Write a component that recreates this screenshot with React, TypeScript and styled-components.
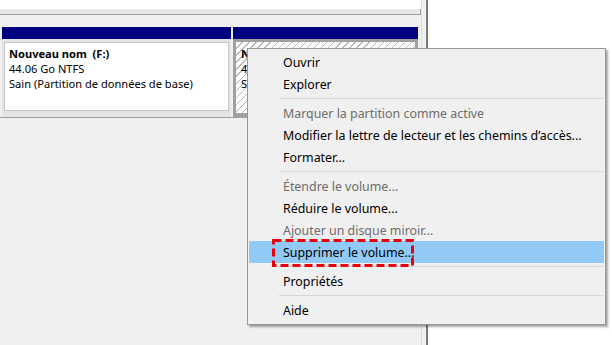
import React from "react";
import styled, { createGlobalStyle } from "styled-components";

const Global = createGlobalStyle`
  html, body { margin: 0; padding: 0; background: #ffffff; }
  body { font-family: "Noto Sans", "Segoe UI", sans-serif; font-size: 12px; }
`;

const Screen = styled.div`
  position: relative;
  width: 612px;
  height: 345px;
  display: flex;
  overflow: hidden;
  background: #ffffff;
`;

const LeftPane = styled.div`
  width: 421px;
  display: flex;
  flex-direction: column;
  background: #f0f0f0;
`;

const ListBottom = styled.div`
  height: 9px;
  background: #ffffff;
`;

const ScrollStrip = styled.div`
  height: 5px;
  background: #e6e6e6;
  border-bottom: 1px solid #a0a0a0;
  border-right: 1px solid #a0a0a0;
`;

const DiskRow = styled.div`
  margin-top: 12px;
  display: flex;
  gap: 2px;
  padding-left: 2px;
  padding-right: 3px;
  border-bottom: 1px solid #a0a0a0;
`;

const Partition = styled.div<{ $w: number }>`
  width: ${(p) => p.$w}px;
  display: flex;
  flex-direction: column;
`;

const Header = styled.div`
  height: 12px;
  background: #000080;
`;

const Body = styled.div`
  height: 78px;
  box-sizing: border-box;
  padding: 3px 2px 6px 2px;
  background: #e4e4e4;
  display: flex;
`;

const SelectedBody = styled(Body)`
  padding: 0;
  border: 3px solid #a0a0a0;
  border-bottom-width: 4px;
  background: #ffffff
    repeating-linear-gradient(
      135deg,
      transparent 0 4px,
      #b8b8b8 4px 5px
    );
`;

const Info = styled.div<{ $sel?: boolean }>`
  flex: 1;
  box-sizing: border-box;
  border: ${(p) => (p.$sel ? "none" : "1px solid #c6c6c6")};
  background: ${(p) => (p.$sel ? "transparent" : "#ffffff")};
  padding: ${(p) => (p.$sel ? "4px 0 0 5px" : "3px 0 0 4px")};
  color: #000000;
  font-size: 11.1px;
  line-height: 15px;
  white-space: nowrap;
  overflow: hidden;
`;

const InfoLine = styled.div<{ $bold?: boolean }>`
  font-weight: ${(p) => (p.$bold ? 700 : 400)};
  white-space: pre;
`;

const Splitter = styled.div`
  width: 7px;
  box-sizing: border-box;
  background: #f0f0f0;
  border-left: 1px solid #dcdcdc;
  border-right: 2px solid #7a7a7a;
`;

const RightPane = styled.div`
  flex: 1;
  background: #ffffff;
`;

const Menu = styled.div`
  position: absolute;
  left: 247px;
  top: 48px;
  width: 359px;
  box-sizing: border-box;
  padding: 2px 1px 3px 1px;
  background: #f0f0f0;
  border: 1px solid #979797;
  box-shadow: 2px 2px 2px rgba(0, 0, 0, 0.35);
  font-size: 12.4px;
`;

const Item = styled.div<{ $disabled?: boolean; $active?: boolean }>`
  height: 22px;
  display: flex;
  align-items: center;
  padding-left: 34px;
  color: ${(p) => (p.$disabled ? "#6d6d6d" : "#000000")};
  background: ${(p) => (p.$active ? "#91c9f7" : "transparent")};
  white-space: nowrap;
`;

const Separator = styled.div`
  height: 7px;
  display: flex;
  align-items: center;
  padding-left: 30px;
  &::after {
    content: "";
    flex: 1;
    height: 1px;
    background: #d7d7d7;
    margin-right: 1px;
  }
`;

const Marker = styled.svg`
  position: absolute;
  left: 272px;
  top: 239px;
`;

const items: Array<{ label: string; disabled?: boolean; active?: boolean } | "sep"> = [
  { label: "Ouvrir" },
  { label: "Explorer" },
  "sep",
  { label: "Marquer la partition comme active", disabled: true },
  { label: "Modifier la lettre de lecteur et les chemins d’accès..." },
  { label: "Formater..." },
  "sep",
  { label: "Étendre le volume...", disabled: true },
  { label: "Réduire le volume..." },
  { label: "Ajouter un disque miroir...", disabled: true },
  { label: "Supprimer le volume...", active: true },
  "sep",
  { label: "Propriétés" },
  "sep",
  { label: "Aide" },
];

export default function App() {
  return (
    <>
      <Global />
      <Screen>
        <LeftPane>
          <ListBottom />
          <ScrollStrip />
          <DiskRow>
            <Partition $w={229}>
              <Header />
              <Body>
                <Info>
                  <InfoLine $bold>Nouveau nom  (F:)</InfoLine>
                  <InfoLine>44.06 Go NTFS</InfoLine>
                  <InfoLine>Sain (Partition de données de base)</InfoLine>
                </Info>
              </Body>
            </Partition>
            <Partition $w={185}>
              <Header />
              <SelectedBody>
                <Info $sel>
                  <InfoLine $bold>N</InfoLine>
                  <InfoLine>4</InfoLine>
                  <InfoLine>S</InfoLine>
                </Info>
              </SelectedBody>
            </Partition>
          </DiskRow>
        </LeftPane>
        <Splitter />
        <RightPane />
        <Menu>
          {items.map((it, i) =>
            it === "sep" ? (
              <Separator key={i} />
            ) : (
              <Item key={i} $disabled={it.disabled} $active={it.active}>
                {it.label}
              </Item>
            )
          )}
        </Menu>
        <Marker width="142" height="28" viewBox="0 0 142 28">
          <rect
            x="1.5"
            y="1.5"
            width="139"
            height="25"
            fill="none"
            stroke="#e8000b"
            strokeWidth="3"
            strokeDasharray="8 4"
          />
        </Marker>
      </Screen>
    </>
  );
}
